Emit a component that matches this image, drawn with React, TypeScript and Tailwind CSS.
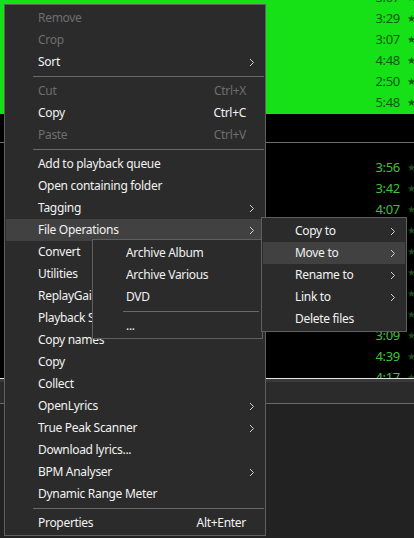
import type { ReactNode } from "react";

type Entry =
  | { kind: "sep" }
  | { kind: "item"; label: string; shortcut?: string; sub?: boolean; disabled?: boolean; active?: boolean };

const MAIN: Entry[] = [
  { kind: "item", label: "Remove", disabled: true },
  { kind: "item", label: "Crop", disabled: true },
  { kind: "item", label: "Sort", sub: true },
  { kind: "sep" },
  { kind: "item", label: "Cut", shortcut: "Ctrl+X", disabled: true },
  { kind: "item", label: "Copy", shortcut: "Ctrl+C" },
  { kind: "item", label: "Paste", shortcut: "Ctrl+V", disabled: true },
  { kind: "sep" },
  { kind: "item", label: "Add to playback queue" },
  { kind: "item", label: "Open containing folder" },
  { kind: "item", label: "Tagging", sub: true },
  { kind: "item", label: "File Operations", sub: true, active: true },
  { kind: "item", label: "Convert" },
  { kind: "item", label: "Utilities" },
  { kind: "item", label: "ReplayGain" },
  { kind: "item", label: "Playback Statistics" },
  { kind: "item", label: "Copy names" },
  { kind: "item", label: "Copy" },
  { kind: "item", label: "Collect" },
  { kind: "item", label: "OpenLyrics", sub: true },
  { kind: "item", label: "True Peak Scanner", sub: true },
  { kind: "item", label: "Download lyrics..." },
  { kind: "item", label: "BPM Analyser", sub: true },
  { kind: "item", label: "Dynamic Range Meter" },
  { kind: "sep" },
  { kind: "item", label: "Properties", shortcut: "Alt+Enter" },
];

const FILE_OPS: Entry[] = [
  { kind: "item", label: "Copy to", sub: true },
  { kind: "item", label: "Move to", sub: true, active: true },
  { kind: "item", label: "Rename to", sub: true },
  { kind: "item", label: "Link to", sub: true },
  { kind: "item", label: "Delete files" },
];

const MOVE_TO: Entry[] = [
  { kind: "item", label: "Archive Album" },
  { kind: "item", label: "Archive Various" },
  { kind: "item", label: "DVD" },
  { kind: "sep" },
  { kind: "item", label: "..." },
];

const GREEN_TIMES = ["3:07", "3:29", "3:07", "4:48", "2:50", "5:48"];
const DARK_TIMES = ["3:56", "3:42", "4:07", "3:31", "4:12", "3:48", "2:59", "3:20", "3:09", "4:39", "4:17"];

function Chevron() {
  return (
    <svg width="6" height="9" viewBox="0 0 6 9" className="shrink-0">
      <path d="M1 1 L4.5 4.5 L1 8" fill="none" stroke="#d0d0d0" strokeWidth="1" />
    </svg>
  );
}

function Menu({ entries, className, sepClass }: { entries: Entry[]; className: string; sepClass: string }) {
  return (
    <div className={`absolute border border-[#5f5f5f] bg-[#2b2b2b] px-[1px] pt-[2px] pb-[1px] ${className}`}>
      {entries.map((e, i) =>
        e.kind === "sep" ? (
          <div key={i} className="flex h-[7px] items-center">
            <div className={`h-px bg-[#6a6a6a] ${sepClass}`} />
          </div>
        ) : (
          <div
            key={i}
            className={`flex h-[22px] items-center pl-[32px] pr-[9px] ${e.active ? "bg-[#414141]" : ""} ${
              e.disabled ? "text-[#6e6e6e]" : "text-[#f2f2f2]"
            }`}
          >
            <span className="flex-1 whitespace-nowrap">{e.label}</span>
            {e.shortcut && <span className="mr-[9px] whitespace-nowrap">{e.shortcut}</span>}
            {e.sub && <Chevron />}
          </div>
        ),
      )}
    </div>
  );
}

function TimeRow({ t, cls, star }: { t: string; cls: string; star: string }): ReactNode {
  return (
    <div className="flex h-[21px] items-center justify-end">
      <span className={`text-[13px] ${cls}`}>{t}</span>
      <span className={`ml-[7px] w-[7px] overflow-hidden text-[10px] ${star}`}>★</span>
    </div>
  );
}

export default function App() {
  return (
    <div className="relative h-[538px] w-[414px] overflow-hidden bg-[#222222] text-[12px] tracking-[-0.3px] font-['Noto_Sans',sans-serif]">
      {/* playlist background */}
      <div className="h-[114px] overflow-hidden bg-[#16e016]">
        <div className="-mt-[13px]">
          {GREEN_TIMES.map((t, i) => (
            <TimeRow key={i} t={t} cls="text-[#0b5a0b]" star="text-[#0b5a0b]" />
          ))}
        </div>
      </div>
      <div className="h-[264px] overflow-hidden bg-black">
        <div className="h-[28px]" />
        <div className="h-px bg-[#6e6e6e]" />
        <div className="pt-[14px]">
          {DARK_TIMES.map((t, i) => (
            <TimeRow key={i} t={t} cls="text-[#3cc23c]" star="text-[#1e4a1e]" />
          ))}
        </div>
      </div>
      <div className="h-px bg-[#e6e6e6]" />
      <div className="h-[3px] bg-[#3a3a3a]" />
      <div className="h-[21px] bg-[#2b2b2b]" />
      <div className="h-px bg-[#6a6a6a]" />

      {/* context menus */}
      <Menu entries={MAIN} className="left-[4px] top-[4px] w-[262px]" sepClass="ml-[27px] flex-1" />
      <Menu entries={MOVE_TO} className="left-[92px] top-[239px] w-[171px]" sepClass="ml-[29px] mr-[2px] flex-1" />
      <Menu entries={FILE_OPS} className="left-[261px] top-[217px] w-[146px]" sepClass="flex-1" />
    </div>
  );
}
